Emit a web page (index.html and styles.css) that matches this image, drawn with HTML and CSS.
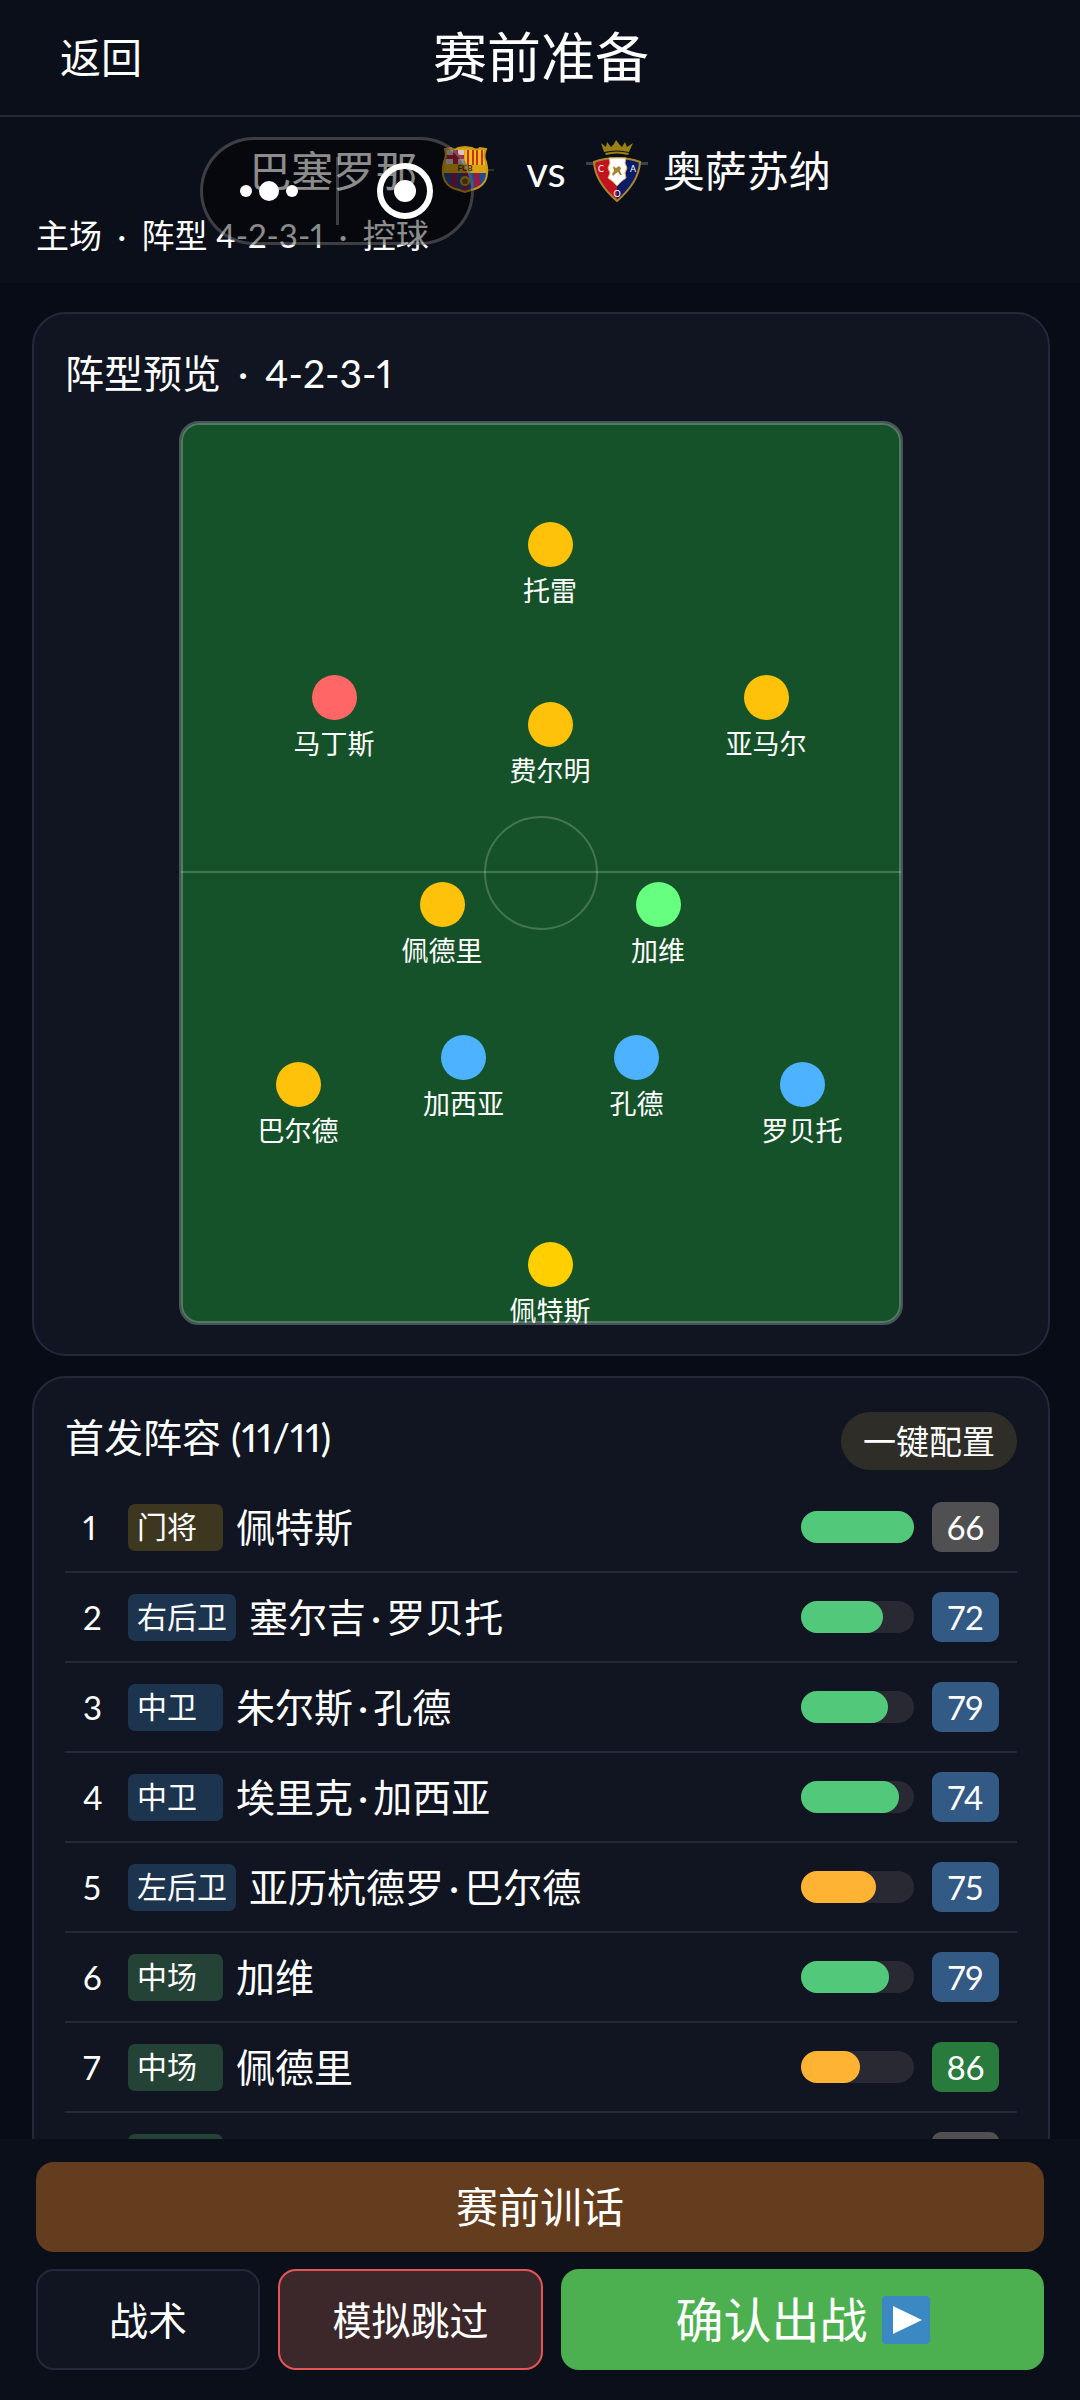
FILE: index.html
```html
<!DOCTYPE html>
<html lang="zh-CN">
  <head>
    <meta charset="utf-8">
    <meta name="viewport" content="width=device-width, initial-scale=1">
    <title>赛前准备</title>
    <link rel="stylesheet" href="styles.css">
  </head>
  <body>

    <header class="topbar">
      <button type="button" class="back">返回</button>
      <h1>赛前准备</h1>
    </header>

    <section class="match">
      <div class="teams">
        <span>巴塞罗那</span>
        <!-- home crest -->
        <svg class="crest" viewBox="-6 0 62 64" aria-hidden="true">
          <defs>
            <clipPath id="shield"><path d="M7 10 L13 9 Q16 12 20 9 L27 8 L34 9 Q39 12 42 9 L48 10 Q45 17 48 23 Q51 34 47 42 Q43 49 33 51 L27 53 L21 51 Q11 49 7 42 Q3 34 6 23 Q9 17 7 10 Z"/></clipPath>
          </defs>
          <path d="M4 31h52" stroke="#5d5a20" stroke-width="1"/>
          <g clip-path="url(#shield)">
            <path fill="#d9a413" d="M0 0h62v64H0z"/>
            <path fill="#d8c4c8" d="M8 11h18v14H8z"/>
            <path fill="#b8203c" d="M15 11h5v14h-5zM8 16h18v4H8z"/>
            <path fill="#f0bd1c" d="M27 11h20v15H27z"/>
            <path fill="#c8321f" d="M29 11h2v15h-2zM34 11h2v15h-2zM38 11h2v15h-2zM43 11h2v15h-2z"/>
            <path fill="#1f4b93" d="M4 34h46v20H4z"/>
            <path fill="#8d1e49" d="M13 34h6v20h-6zM24 34h6v20h-6zM36 34h6v20h-6z"/>
          </g>
          <path d="M7 10 L13 9 Q16 12 20 9 L27 8 L34 9 Q39 12 42 9 L48 10 Q45 17 48 23 Q51 34 47 42 Q43 49 33 51 L27 53 L21 51 Q11 49 7 42 Q3 34 6 23 Q9 17 7 10 Z" fill="none" stroke="#c99a17" stroke-width="2"/>
          <circle cx="27" cy="42" r="5" fill="#c99a17"/>
          <path d="M27 39l3 2-1 4h-4l-1-4z" fill="#6b5514"/>
          <text x="27" y="32" class="crest-fcb">FCB</text>
        </svg>
        <span class="vs">vs</span>
        <!-- away crest -->
        <svg class="crest" viewBox="0 0 62 64" aria-hidden="true">
          <path fill="#3c4049" d="M0 23h62v3H0z"/>
          <path fill="#9a8116" d="M18 13 L15 4 L20 8 L21 3 L25 8 L28 5 L30 1 L33 5 L36 8 L39 3 L41 8 L47 4 L43 13 Q31 10 18 13 Z M19 14 Q31 11 43 14 L42 16 Q31 13 20 16 Z"/>
          <path fill="#c41320" d="M31 19 Q18 19 8 23 Q9 43 31 62 Z"/>
          <path fill="#0d1c66" d="M31 19 Q44 19 54 23 Q53 43 31 62 Z"/>
          <path fill="none" stroke="#a8872b" stroke-width="2" d="M31 19 Q18 19 8 23 Q9 43 31 62 Q53 43 54 23 Q44 19 31 19 Z"/>
          <path fill="#fff" stroke="#d2b463" d="M23 19 H40 L39 24 L41 29 L39 34 L40 39 Q35 42 31 47 Q27 42 22 39 L24 34 L22 29 L24 24 Z"/>
          <path fill="#a8872b" d="M27 27l3 2 3-2 2 2-1 3 2 4h-2l-2-3-3 2-2 2-1-2 2-3z"/>
          <text x="15" y="33" class="crest-letter">C</text>
          <text x="47" y="33" class="crest-letter">A</text>
          <text x="31" y="58" class="crest-letter">O</text>
        </svg>
        <span>奥萨苏纳</span>
      </div>
      <p class="info">主场 <span class="sep">·</span> 阵型 4-2-3-1 <span class="sep">·</span> 控球</p>

      <!-- floating capsule of the host app -->
      <div class="capsule">
        <button type="button" aria-label="更多">
          <svg width="58" height="20" viewBox="0 0 58 20"><g fill="#fff"><circle cx="6" cy="10" r="6"/><circle cx="29" cy="10" r="10"/><circle cx="52" cy="10" r="6"/></g></svg>
        </button>
        <span class="capsule-line"></span>
        <button type="button" aria-label="关闭">
          <svg width="58" height="58" viewBox="0 0 58 58"><circle cx="29" cy="29" r="25" fill="none" stroke="#fff" stroke-width="6"/><circle cx="29" cy="29" r="11" fill="#fff"/></svg>
        </button>
      </div>
    </section>

    <main>
      <section class="card">
        <h2>阵型预览 <span class="sep">·</span> 4-2-3-1</h2>
        <div class="pitch">
          <div class="half-line"></div>
          <div class="circle"></div>
          <div class="player gold st">托雷</div>
          <div class="player red lw">马丁斯</div>
          <div class="player gold am">费尔明</div>
          <div class="player gold rw">亚马尔</div>
          <div class="player gold lm">佩德里</div>
          <div class="player green rm">加维</div>
          <div class="player gold lb">巴尔德</div>
          <div class="player blue lcb">加西亚</div>
          <div class="player blue rcb">孔德</div>
          <div class="player blue rb">罗贝托</div>
          <div class="player yellow gk">佩特斯</div>
        </div>
      </section>

      <section class="card">
        <div class="card-head">
          <h2>首发阵容 (11/11)</h2>
          <button type="button" class="auto">一键配置</button>
        </div>
        <ol class="lineup">
          <li>
            <span class="num">1</span><span class="pos pos-gk">门将</span><span class="name">佩特斯</span>
            <span class="bar"><span class="fill" style="width: 100%"></span></span><span class="rate">66</span>
          </li>
          <li>
            <span class="num">2</span><span class="pos pos-df">右后卫</span><span class="name">塞尔吉<span class="dot">·</span>罗贝托</span>
            <span class="bar"><span class="fill" style="width: 73%"></span></span><span class="rate good">72</span>
          </li>
          <li>
            <span class="num">3</span><span class="pos pos-df">中卫</span><span class="name">朱尔斯<span class="dot">·</span>孔德</span>
            <span class="bar"><span class="fill" style="width: 77%"></span></span><span class="rate good">79</span>
          </li>
          <li>
            <span class="num">4</span><span class="pos pos-df">中卫</span><span class="name">埃里克<span class="dot">·</span>加西亚</span>
            <span class="bar"><span class="fill" style="width: 87%"></span></span><span class="rate good">74</span>
          </li>
          <li>
            <span class="num">5</span><span class="pos pos-df">左后卫</span><span class="name">亚历杭德罗<span class="dot">·</span>巴尔德</span>
            <span class="bar"><span class="fill tired" style="width: 66%"></span></span><span class="rate good">75</span>
          </li>
          <li>
            <span class="num">6</span><span class="pos pos-mf">中场</span><span class="name">加维</span>
            <span class="bar"><span class="fill" style="width: 78%"></span></span><span class="rate good">79</span>
          </li>
          <li>
            <span class="num">7</span><span class="pos pos-mf">中场</span><span class="name">佩德里</span>
            <span class="bar"><span class="fill tired" style="width: 52%"></span></span><span class="rate great">86</span>
          </li>
          <li>
            <span class="num"></span><span class="pos pos-mf"></span><span class="name"></span>
            <span class="bar"></span><span class="rate"></span>
          </li>
        </ol>
      </section>
    </main>

    <footer class="actions">
      <button type="button" class="btn talk">赛前训话</button>
      <div class="actions-row">
        <button type="button" class="btn tactics">战术</button>
        <button type="button" class="btn skip">模拟跳过</button>
        <button type="button" class="btn confirm">确认出战
          <svg width="48" height="48" viewBox="0 0 48 48" aria-hidden="true"><rect width="48" height="48" rx="4" fill="#3b88c3"/><path d="M11 10v28l29-14z" fill="#fff"/></svg>
        </button>
      </div>
    </footer>

  </body>
</html>
```
FILE: styles.css
```css
* {
  box-sizing: border-box;
}

body {
  margin: 0;
  height: 100vh;
  display: flex;
  flex-direction: column;
  background-color: #080c16;
  color: #fff;
  font-family: Lato, "Noto Sans CJK SC", sans-serif;
  font-size: 33px;
  font-variant-numeric: proportional-nums;
}

h1, h2, p, ol {
  margin: 0;
  padding: 0;
  font-weight: normal;
}

button {
  font-family: inherit;
  line-height: 56px;
  color: inherit;
  border: none;
  background: none;
  padding: 0;
  cursor: pointer;
}

/* top bar */

.topbar {
  flex: none;
  display: grid;
  grid-template-columns: 1fr auto 1fr;
  align-items: center;
  height: 117px;
  padding: 0 58px 0 60px;
  background-color: #0b0f1a;
  border-bottom: 2px solid #222636;
}

.back {
  justify-self: start;
  font-size: 41px;
}

h1 {
  font-size: 54px;
  line-height: 80px;
}

/* match info */

.match {
  flex: none;
  position: relative;
  padding: 22px 36px 26px;
  background-color: #0b0f1a;
}

.teams {
  display: flex;
  justify-content: center;
  align-items: center;
  gap: 15px;
  font-size: 42px;
  line-height: 64px;
}

.vs {
  margin: 0 5px 0 17px;
}

.crest {
  width: 62px;
  height: 64px;
}

.crest-fcb {
  font-size: 8px;
  font-weight: bold;
  text-anchor: middle;
  fill: #2c2508;
}

.crest-letter {
  font-size: 9px;
  text-anchor: middle;
  fill: #fff;
}

.info {
  margin-top: 10px;
  line-height: 44px;
}

.sep {
  margin: 0 7px;
}

.capsule {
  position: absolute;
  left: 200px;
  top: 20px;
  width: 274px;
  height: 108px;
  display: flex;
  align-items: center;
  border: 3px solid rgba(255, 255, 255, 0.22);
  border-radius: 54px;
  background-color: rgba(0, 0, 0, 0.45);
}

.capsule button {
  flex: 1;
  display: flex;
  justify-content: center;
}

.capsule-line {
  width: 3px;
  height: 68px;
  background-color: rgba(255, 255, 255, 0.22);
}

/* cards */

main {
  flex: 1;
  min-height: 0;
  overflow: hidden;
  padding: 29px 30px 0 32px;
}

.card {
  margin-bottom: 20px;
  padding: 31px 31px 29px;
  border: 2px solid #24283b;
  border-radius: 34px;
  background-color: #101521;
}

h2 {
  font-size: 39px;
  line-height: 56px;
}

.pitch {
  position: relative;
  max-width: 724px;
  height: 904px;
  margin: 20px auto 0;
  border: 2px solid #47545a;
  border-radius: 20px;
  background-color: #165229;
  box-shadow: inset 0 0 0 2px #527a60;
}

.half-line {
  position: absolute;
  top: 448px;
  left: 0;
  right: 0;
  height: 2px;
  background-color: rgba(255, 255, 255, 0.2);
}

.circle {
  position: absolute;
  top: 50%;
  left: 50%;
  width: 114px;
  height: 114px;
  margin: -57px 0 0 -57px;
  border: 2px solid rgba(255, 255, 255, 0.2);
  border-radius: 50%;
}

.player {
  position: absolute;
  width: 120px;
  margin-left: -51px;
  text-align: center;
  font-size: 27px;
  line-height: 38px;
}

.player::before {
  content: "";
  display: block;
  width: 45px;
  height: 45px;
  margin: 0 auto 5px;
  border-radius: 50%;
}

.gold::before { background-color: #ffc20a; }
.yellow::before { background-color: #ffcf00; }
.red::before { background-color: #ff6666; }
.green::before { background-color: #66ff80; }
.blue::before { background-color: #4db2ff; }

.st { left: 50%; top: 11%; }
.lw { left: 20%; top: 28%; }
.am { left: 50%; top: 31%; }
.rw { left: 80%; top: 28%; }
.lm { left: 35%; top: 51%; }
.rm { left: 65%; top: 51%; }
.lb { left: 15%; top: 71%; }
.lcb { left: 38%; top: 68%; }
.rcb { left: 62%; top: 68%; }
.rb { left: 85%; top: 71%; }
.gk { left: 50%; top: 91%; }

/* line-up */

.card-head {
  display: flex;
  justify-content: space-between;
  align-items: flex-start;
  height: 64px;
  margin-bottom: 10px;
}

.auto {
  height: 58px;
  margin-top: 3px;
  padding: 0 22px;
  border-radius: 29px;
  background-color: #2e2d28;
  font-size: 33px;
}

.lineup {
  list-style: none;
}

.lineup li {
  display: flex;
  align-items: center;
  height: 90px;
  padding: 0 18px;
  border-bottom: 2px solid #24283b;
}

.num {
  width: 45px;
  line-height: 50px;
}

.pos {
  min-width: 95px;
  height: 47px;
  padding: 0 9px;
  border-radius: 7px;
  font-size: 30px;
  line-height: 45px;
}

.pos-gk { background-color: #3d371f; }
.pos-df { background-color: #1c344d; }
.pos-mf { background-color: #244236; }

.name {
  flex: 1;
  margin-left: 13px;
  font-size: 39px;
  line-height: 56px;
}

.dot {
  margin: 0 5px;
}

.bar {
  width: 113px;
  height: 32px;
  border-radius: 16px;
  background-color: #282932;
}

.fill {
  display: block;
  height: 100%;
  border-radius: 16px;
  background-color: #52c97a;
}

.tired {
  background-color: #ffb333;
}

.rate {
  width: 67px;
  height: 50px;
  margin-left: 18px;
  border-radius: 9px;
  background-color: #505052;
  text-align: center;
  line-height: 50px;
}

.good { background-color: #335a85; }
.great { background-color: #297a3d; }

/* bottom buttons */

.actions {
  flex: none;
  padding: 23px 36px 30px;
  background-color: #0b0f1a;
}

.actions-row {
  display: flex;
  gap: 18px;
  margin-top: 17px;
}

.btn {
  height: 101px;
  border: 2px solid transparent;
  border-radius: 18px;
  font-size: 39px;
}

.talk {
  width: 100%;
  height: 90px;
  border: none;
  background-color: #643d1e;
  font-size: 42px;
}

.tactics {
  flex: 223;
  border-color: #24283b;
  background-color: #101521;
}

.skip {
  flex: 264;
  border-color: #e65555;
  background-color: #3c282a;
}

.confirm {
  flex: 485;
  display: flex;
  justify-content: center;
  align-items: center;
  gap: 14px;
  background-color: #4db050;
  font-size: 48px;
}
```
